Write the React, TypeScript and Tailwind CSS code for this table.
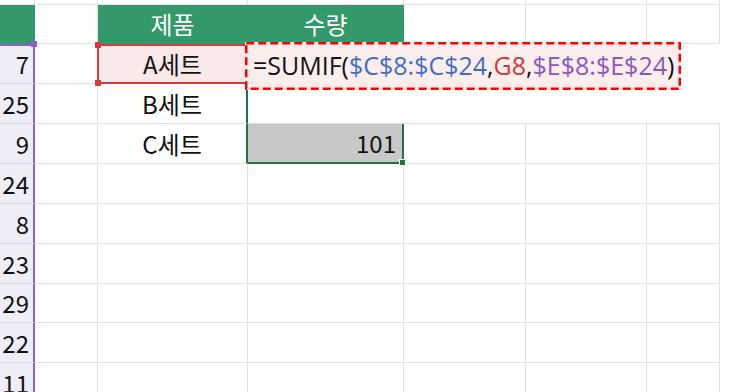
import React from "react";

const ROW_NUMS = ["7", "25", "9", "24", "8", "23", "29", "22", "11"];
const ITEMS: Record<number, string> = { 0: "A세트", 1: "B세트", 2: "C세트" };

const font = { fontFamily: '"Noto Sans CJK KR", "Noto Sans", sans-serif' };
const formulaFont = { fontFamily: '"Open Sans", "Noto Sans CJK KR", sans-serif' };

const LINES = "border-r border-b border-[#e1e1e1]";
const HEAD = "bg-[#33996a] border-r border-b border-[#33996a]";

// one sheet cell; by default the gridlines sit on the right and bottom edges
const Cell: React.FC<{ className?: string; children?: React.ReactNode }> = ({ className = LINES, children }) => (
  <div className={`relative flex items-center min-w-0 ${className}`}>{children}</div>
);

const Handle: React.FC<{ className: string }> = ({ className }) => (
  <span className={`absolute w-[6px] h-[6px] z-10 ${className}`} />
);

export default function App() {
  return (
    <div className="relative w-[729px] h-[392px] overflow-hidden bg-white text-[24px] text-[#111]" style={font}>
      <div className="grid grid-cols-[35px_63px_150px_156px_122px_121px_73px] grid-rows-[5px_39px_40px_40px_40px_40px_40px_40px_39px_40px_40px] w-[720px]">
        {/* partial row at the top */}
        {Array.from({ length: 7 }).map((_, i) => (
          <Cell key={`t${i}`} />
        ))}

        {/* table header */}
        <Cell className={HEAD} />
        <Cell />
        <Cell className={`${HEAD} justify-center text-white`}>제품</Cell>
        <Cell className={`${HEAD} justify-center text-white`}>수량</Cell>
        <Cell />
        <Cell />
        <Cell />

        {ROW_NUMS.map((n, r) => {
          // rows 8 and 9: the in-cell editor hides the gridlines from column D on
          const editRow = r < 2;
          const editCls = r === 0 ? "" : "border-b border-[#e1e1e1]";
          return (
            <React.Fragment key={r}>
              {/* $E$8:$E$24 range, marked in purple */}
              <Cell
                className={`bg-[#efedf7] border-b border-b-[#dcdce4] border-r-2 border-r-[#8c62c6] justify-end pr-[4px] ${
                  r === 0 ? "shadow-[inset_0_2px_0_#8c62c6]" : ""
                }`}
              >
                {r === 0 && <Handle className="-top-[3px] -right-[4px] bg-[#8c62c6]" />}
                {n}
              </Cell>
              <Cell />
              {r === 0 ? (
                // G8 reference, marked in red
                <Cell className="bg-[#fbe8e8] border-2 border-[#d23c3c] -ml-px justify-center">
                  <Handle className="-top-[4px] -left-[4px] bg-[#d23c3c]" />
                  <Handle className="-bottom-[4px] -left-[4px] bg-[#d23c3c]" />
                  {ITEMS[r]}
                </Cell>
              ) : (
                <Cell
                  className={`border-b border-b-[#e1e1e1] justify-center ${
                    r < 3 ? "border-r-2 border-r-[#217346]" : "border-r border-r-[#e1e1e1]"
                  }`}
                >
                  {ITEMS[r]}
                </Cell>
              )}
              {r === 2 ? (
                <Cell className="bg-[#c8c8c8] border-r-2 border-b-2 border-[#217346] justify-end pr-[6px]">
                  101
                  <Handle className="-bottom-[4px] -right-[4px] w-[7px] h-[7px] bg-[#217346] border border-white" />
                </Cell>
              ) : editRow ? (
                <Cell className={editCls} />
              ) : (
                <Cell />
              )}
              {editRow ? <Cell className={editCls} /> : <Cell />}
              {editRow ? <Cell className={editCls} /> : <Cell />}
              {editRow ? <Cell className={editCls} /> : <Cell />}
            </React.Fragment>
          );
        })}
      </div>

      {/* dashed callout round the formula being typed */}
      <div className="absolute left-[245px] top-[42px] w-[436px] h-[48px] bg-[#fdeeee] flex items-center pl-[8px]">
        <svg className="absolute inset-0" width="436" height="48">
          <rect x="1.25" y="1.25" width="433.5" height="45.5" fill="none" stroke="#ff0000" strokeWidth="2.5" strokeDasharray="8 4" />
        </svg>
        <span className="relative whitespace-nowrap text-[25px]" style={formulaFont}>
          =SUMIF(<span className="text-[#3f6fc4]">$C$8:$C$24</span>,<span className="text-[#d03a3a]">G8</span>,
          <span className="text-[#8a58bd]">$E$8:$E$24</span>)
        </span>
      </div>
    </div>
  );
}
